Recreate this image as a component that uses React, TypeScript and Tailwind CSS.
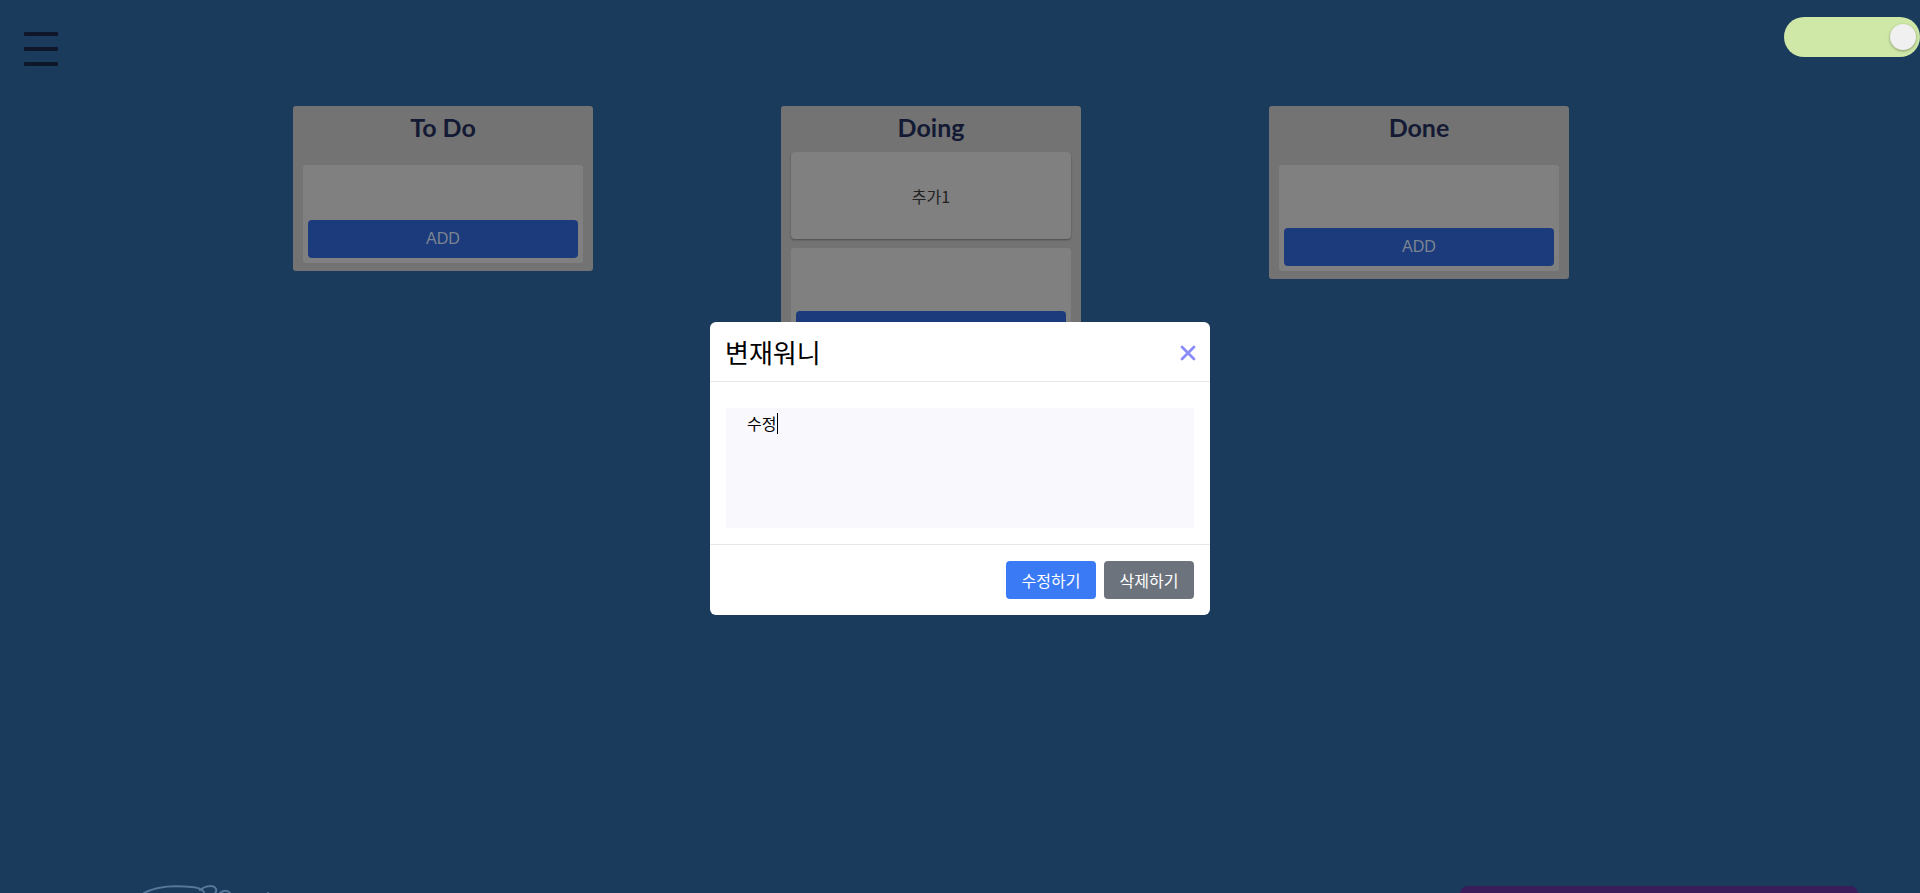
import React from "react";

const columns = [
  { title: "To Do", cards: [] as string[], gap: "mt-[23px]", inputH: "h-[55px]" },
  { title: "Doing", cards: ["추가1"], gap: "mt-[10px]", inputH: "h-[63px]" },
  { title: "Done", cards: [] as string[], gap: "mt-[23px]", inputH: "h-[63px]" },
];

function Hamburger() {
  return (
    <div className="flex flex-col gap-[11px] pt-[32px] pl-[24px]">
      <div className="h-[4px] w-[34px] rounded-[1px] bg-[#10162a]" />
      <div className="h-[4px] w-[34px] rounded-[1px] bg-[#10162a]" />
      <div className="h-[4px] w-[34px] rounded-[1px] bg-[#10162a]" />
    </div>
  );
}

function Toggle() {
  return (
    <div className="mt-[17px] flex h-[40px] w-[136px] items-center justify-end rounded-full bg-[#cfe8a8] pr-[4px]">
      <div className="h-[26px] w-[26px] rounded-full bg-[#f0f0f0] shadow-[0_1px_3px_rgba(0,0,0,0.35)]" />
    </div>
  );
}

function Column({
  title,
  cards,
  gap,
  inputH,
}: {
  title: string;
  cards: string[];
  gap: string;
  inputH: string;
}) {
  return (
    <div className="w-[300px] rounded-[3px] bg-[#737373] px-[10px] pt-[6px] pb-[8px]">
      <h2 className="text-center text-[25px] leading-[30px] font-bold text-[#141a33] [font-family:Lato,'Noto_Sans',sans-serif]">
        {title}
      </h2>
      <div className={`${gap} flex flex-col gap-[9px]`}>
        {cards.map((c) => (
          <div
            key={c}
            className="flex h-[87px] items-center justify-center rounded-[4px] bg-[#808080] text-[16px] text-[#222222] shadow-[0_1px_2px_rgba(0,0,0,0.35)] [font-family:'Noto_Sans_CJK_KR',sans-serif]"
          >
            {c}
          </div>
        ))}
        <div className="rounded-[3px] bg-[#808080] px-[5px] pb-[5px]">
          <div className={inputH} />
          <button className="flex h-[38px] w-full items-center justify-center rounded-[4px] bg-[#1b3b7c] text-[16px] text-[#7c8491] [font-family:'Liberation_Sans',Arial,sans-serif]">
            ADD
          </button>
        </div>
      </div>
    </div>
  );
}

function Logo() {
  return (
    <svg width="140" height="12" viewBox="0 0 140 12" className="ml-[140px] shrink-0">
      <path
        d="M1 11 C 12 3, 32 1, 52 3 C 58 3.5, 62 5, 64 8 M 60 6 C 66 1, 74 1, 76 5 C 77 8, 74 11, 72 12 M 80 9 C 84 6, 88 6, 90 9"
        fill="none"
        stroke="#58769a"
        strokeWidth="2"
        strokeLinecap="round"
      />
      <path d="M126 11 L 128 9" stroke="#58769a" strokeWidth="2" strokeLinecap="round" />
    </svg>
  );
}

function EditModal() {
  return (
    <div className="absolute inset-0 flex justify-center pt-[322px]">
      <div className="h-fit w-[500px] rounded-[6px] bg-white [font-family:'Noto_Sans_CJK_KR','Noto_Sans',sans-serif]">
        <div className="flex h-[60px] items-center justify-between border-b border-[#e5e7eb] pr-[14px] pl-[15px]">
          <span className="pt-[1px] text-[26px] leading-none text-black">변재워니</span>
          <svg width="16" height="16" viewBox="0 0 16 16" className="mt-[3px]">
            <path
              d="M2 2 L14 14 M14 2 L2 14"
              stroke="#8b8bf5"
              strokeWidth="2.8"
              strokeLinecap="round"
            />
          </svg>
        </div>
        <div className="px-[16px] pt-[26px] pb-[16px]">
          <div className="h-[120px] bg-[#f9f9fd] pt-[3px] pl-[21px] text-[16px] leading-[24px] text-black">
            <span className="inline-flex items-center">
              수정
              <span className="ml-[1px] inline-block h-[21px] w-[1px] bg-black" />
            </span>
          </div>
        </div>
        <div className="flex justify-end gap-[8px] border-t border-[#e5e7eb] px-[16px] py-[16px]">
          <button className="h-[38px] w-[90px] rounded-[4px] bg-[#3a7bf5] text-[16px] text-white">
            수정하기
          </button>
          <button className="h-[38px] w-[90px] rounded-[4px] bg-[#6c737d] text-[16px] text-white">
            삭제하기
          </button>
        </div>
      </div>
    </div>
  );
}

export default function App() {
  return (
    <div className="relative flex h-[893px] w-full flex-col overflow-hidden bg-[#1b3b5d]">
      <header className="flex h-[106px] items-start justify-between">
        <Hamburger />
        <Toggle />
      </header>
      <main className="flex flex-1 items-start gap-[188px] pl-[293px]">
        {columns.map((col) => (
          <Column key={col.title} title={col.title} cards={col.cards} gap={col.gap} inputH={col.inputH} />
        ))}
      </main>
      <footer className="flex h-[9px] items-start overflow-visible">
        <Logo />
        <div className="mt-[2px] mr-[62px] ml-auto h-[60px] w-[398px] shrink-0 rounded-[8px] bg-[#391d5b]" />
      </footer>
      <EditModal />
    </div>
  );
}
